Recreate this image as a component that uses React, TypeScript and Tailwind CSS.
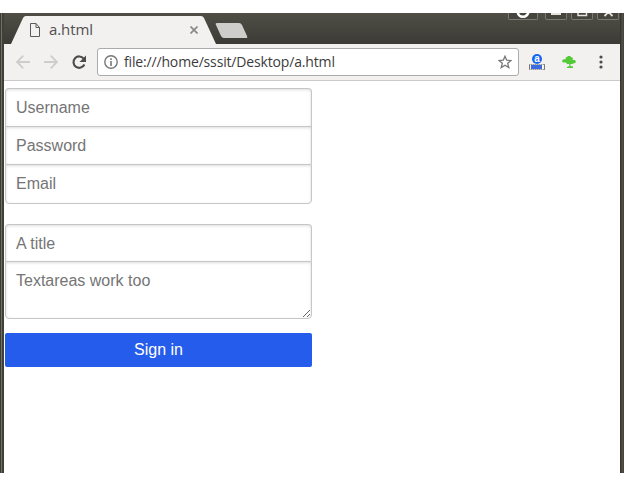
import type { ReactNode } from 'react';

const fieldClass =
  'block w-full bg-white px-[10px] text-[16px] text-[#333] placeholder:text-[#757575] outline-none border-[#c6c6c6] shadow-[inset_0_1px_3px_#ddd]';

function TitleButton({ className, children }: { className: string; children: ReactNode }) {
  return (
    <div className={`h-[7px] overflow-hidden rounded-b-[2px] border border-t-0 border-[#7b7a72] bg-[#45443d] ${className}`}>
      {children}
    </div>
  );
}

function TitleBar() {
  return (
    <div className="flex h-[31px] w-full bg-linear-to-b from-[#504f46] to-[#3b3a35]">
      <div className="relative ml-[7px] flex h-[31px] w-[206px] shrink-0 items-center">
        <svg className="absolute inset-0" width="206" height="31" viewBox="0 0 206 31">
          <path d="M0 31 L12 5 Q13 3 15 3 H190 Q192 3 193 5 L205 31 Z" fill="#f2f1f0" />
        </svg>
        <svg className="relative ml-[19px] mt-[3px] shrink-0" width="10" height="14" viewBox="0 0 10 14" fill="none" stroke="#5b5b5b">
          <path d="M.5 .5H6L9.500 4.500V13.500H.5Z" />
          <path d="M6 .5V4.500H9.500" />
        </svg>
        <span className="relative ml-[9px] mt-px w-[141px] whitespace-nowrap text-[15px] leading-[20px] tracking-[-0.1px] text-[#505050]">a.html</span>
        <svg className="relative mt-[3px] shrink-0" width="8" height="8" viewBox="0 0 8 8" stroke="#888" strokeWidth="1.7">
          <path d="M.5 .5L7.500 7.500M7.500 .5L.5 7.500" />
        </svg>
      </div>
      <svg className="-ml-[2px] mt-[10px] shrink-0" width="34" height="15" viewBox="0 0 34 15">
        <path d="M2 0H24Q26 0 27 2L32 13Q33 15 31 15H9Q7 15 6 13L1 2Q0 0 2 0Z" fill="#cecdcc" />
      </svg>
      <div className="ml-auto mr-px flex">
        <TitleButton className="mr-[7px] w-[30px]">
          <svg width="28" height="7" viewBox="0 0 28 7" fill="none" stroke="#fff">
            <circle cx="14" cy="-1.500" r="5.300" strokeWidth="2.600" />
          </svg>
        </TitleButton>
        <TitleButton className="mr-[4px] w-[22px]">
          <svg width="20" height="7" viewBox="0 0 20 7"><path d="M5 0H15V2H5Z" fill="#e5e3df" /></svg>
        </TitleButton>
        <TitleButton className="mr-[4px] w-[22px]">
          <svg width="20" height="7" viewBox="0 0 20 7"><path d="M6 0V2.500H14.500V0" fill="none" stroke="#e5e3df" strokeWidth="1.500" /></svg>
        </TitleButton>
        <TitleButton className="w-[22px]">
          <svg width="20" height="7" viewBox="0 0 20 7"><path d="M6.500 3L10.500 -1L14.500 3" fill="none" stroke="#e5e3df" strokeWidth="1.800" /></svg>
        </TitleButton>
      </div>
    </div>
  );
}

function Toolbar() {
  return (
    <div className="flex h-[37px] w-full items-center border-b border-[#cbcac9] bg-[#f2f1f0]">
      <svg className="ml-[12px] shrink-0" width="14" height="14" viewBox="0 0 14 14" fill="none" stroke="#cecdcc" strokeWidth="1.800">
        <path d="M14 7H1M7.300 .700L1 7L7.300 13.300" />
      </svg>
      <svg className="ml-[14px] shrink-0" width="14" height="14" viewBox="0 0 14 14" fill="none" stroke="#cecdcc" strokeWidth="1.800">
        <path d="M0 7H13M6.700 .700L13 7L6.700 13.300" />
      </svg>
      <svg className="ml-[14px] shrink-0" width="15" height="15" viewBox="0 0 15 15">
        <path d="M12.400 9.500A5.700 5.700 0 1 1 11.700 3.600" fill="none" stroke="#4b4b4b" strokeWidth="2.100" />
        <path d="M14 .5V7H7.500Z" fill="#4b4b4b" />
      </svg>
      <div className="ml-[10px] flex h-[28px] w-[422px] items-center rounded-[3px] border border-[#ababab] bg-white">
        <svg className="ml-[6px] shrink-0" width="14" height="14" viewBox="0 0 14 14" fill="none" stroke="#777">
          <circle cx="7" cy="7" r="6.200" strokeWidth="1.400" />
          <path d="M7 6V11M7 3.300V5" strokeWidth="1.600" />
        </svg>
        <span className="ml-[6px] whitespace-nowrap text-[14px] leading-[20px] tracking-[-0.16px] text-[#3c3c3c]">file:///home/sssit/Desktop/a.html</span>
        <svg className="ml-auto mr-[6px] shrink-0" width="14" height="14" viewBox="0 0 14 14">
          <path d="M7 1.200L8.700 5.200L13 5.500L9.700 8.300L10.800 12.500L7 10.200L3.200 12.500L4.300 8.300L1 5.500L5.300 5.200Z" fill="none" stroke="#777" strokeWidth="1.300" />
        </svg>
      </div>
      <div className="ml-[10px] flex w-[16px] flex-col items-center">
        <div className="flex h-[10px] w-[10px] items-center justify-center rounded-full bg-[#1764f2] font-['Liberation_Sans',sans-serif] text-[10px] font-bold leading-[10px] text-white"><span className="-mt-px">a</span></div>
        <svg width="16" height="6" viewBox="0 0 16 6">
          <path d="M.5 0V6M15.500 0V6" stroke="#777" />
          <path d="M0 .5H16M0 5.500H16" stroke="#999" strokeDasharray="1.500 .500" />
          <path d="M2 1H13V5H2Z" fill="#3d69e1" /><path d="M13.500 1V5" stroke="#fff" />
        </svg>
      </div>
      <svg className="ml-[17px] shrink-0" width="14" height="13" viewBox="0 0 14 13" fill="#54c936">
        <path d="M0 5L1 3.500L4 3L3.500 1.500L5 1L6 0H8L9 1L11 2L10.500 4L13 4L14 6L13 7L10 8L8.500 8V10L11 10.500V12H5V11L7.500 10L7 8L5 8L4 6.500L1 6.500Z" />
      </svg>
      <svg className="ml-[23px] shrink-0" width="4" height="14" viewBox="0 0 4 14" fill="#4b4b4b">
        <circle cx="2" cy="2" r="1.600" /><circle cx="2" cy="7" r="1.600" /><circle cx="2" cy="12" r="1.600" />
      </svg>
    </div>
  );
}

export default function App() {
  return (
    <div className="h-[486px] w-[624px] overflow-hidden bg-white pt-[13px] font-['Open_Sans','Noto_Sans',sans-serif]">
      <div className="flex h-[460px] w-full bg-[#403f38]">
        <div className="w-[4px] shrink-0 border-r-2 border-[#403f38] bg-linear-to-r from-[#3c3b36] from-50% to-[#716f67] to-50%" />
        <div className="w-[616px] shrink-0 bg-white">
          <TitleBar />
          <Toolbar />
          <form className="ml-px mt-[7px] w-[307px] font-['Liberation_Sans',Arial,sans-serif] text-[16px]">
            <fieldset>
              <input className={`${fieldClass} h-[38px] rounded-t-[4px] border border-b-0`} placeholder="Username" />
              <input className={`${fieldClass} h-[38px] border border-b-0`} placeholder="Password" />
              <input className={`${fieldClass} h-[40px] rounded-b-[4px] border`} placeholder="Email" />
            </fieldset>
            <fieldset className="mt-[20px]">
              <input className={`${fieldClass} h-[37px] rounded-t-[4px] border border-b-0 pt-[2px]`} placeholder="A title" />
              <textarea className={`${fieldClass} h-[58px] resize rounded-b-[4px] border pt-[9px] leading-[20px]`} placeholder="Textareas work too" />
            </fieldset>
            <button type="button" className="mt-[14px] block h-[34px] w-full rounded-[2px] bg-[#265cec] text-center leading-[34px] text-white">Sign in</button>
          </form>
        </div>
        <div className="w-[4px] shrink-0 bg-linear-to-r from-[#37362f] from-25% via-[#56544b] via-50% to-[#403f38]" />
      </div>
    </div>
  );
}
